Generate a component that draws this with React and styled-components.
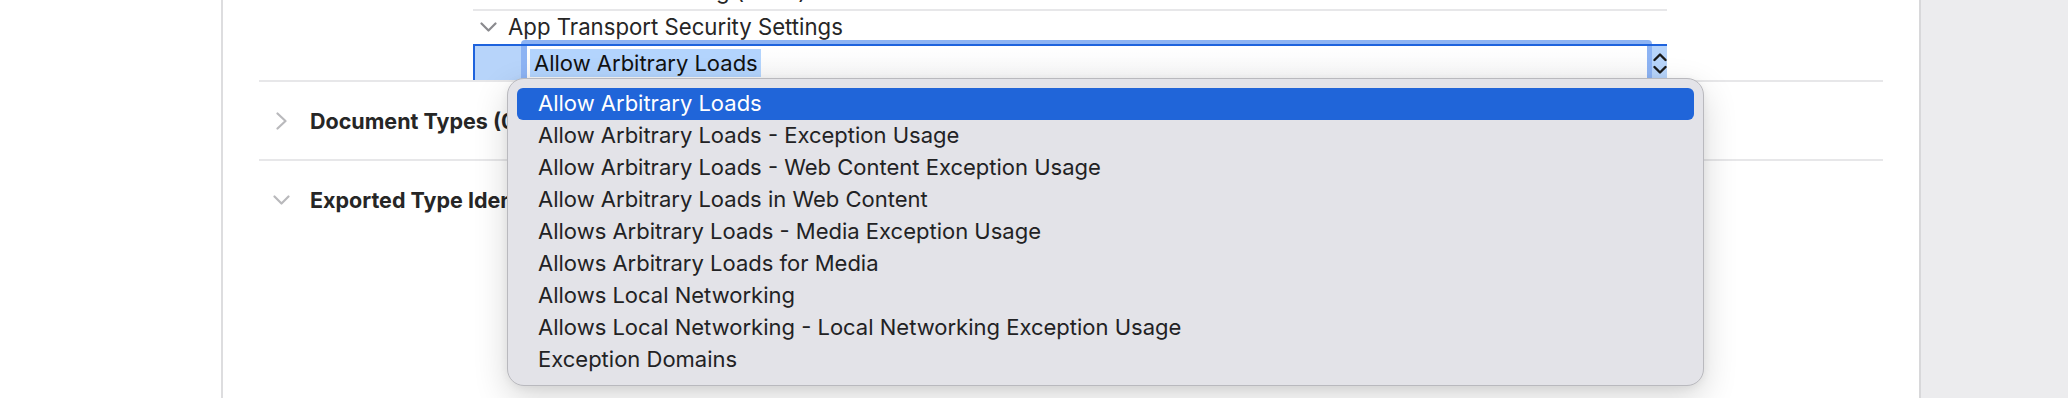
import React from 'react';
import styled, { createGlobalStyle } from 'styled-components';

const GlobalStyle = createGlobalStyle`
  html, body { margin: 0; padding: 0; background: #ffffff; }
  body {
    font-family: Inter, "Noto Sans", "Liberation Sans", sans-serif;
    width: 2068px;
    height: 398px;
    overflow: hidden;
    -webkit-font-smoothing: antialiased;
  }
`;

const Page = styled.div`
  display: flex;
  width: 2068px;
  height: 398px;
  overflow: hidden;
`;

const Sidebar = styled.div`
  width: 221px;
  flex: none;
  background: #ffffff;
  border-right: 2px solid #dddddf;
`;

const Main = styled.main`
  flex: 1;
  min-width: 0;
  display: flex;
  flex-direction: column;
  padding: 0 36px;
  background: #ffffff;
`;

const Inspector = styled.aside`
  width: 147px;
  flex: none;
  background: #ececee;
  border-left: 2px solid #d8d8da;
`;

const PlistTable = styled.div`
  margin: -26px 216px 0 214px;
  display: flex;
  flex-direction: column;
`;

const PlistRow = styled.div`
  display: flex;
  align-items: center;
  height: ${p => p.$h}px;
  padding-left: ${p => p.$indent}px;
  padding-bottom: 2px;
  box-sizing: border-box;
  border-bottom: ${p => (p.$divider ? '2px solid #e7e7e9' : 'none')};
  font-size: 22.2px;
  color: #262626;
  white-space: nowrap;
`;

const Disclosure = styled.span`
  display: inline-flex;
  width: 17px;
  height: 17px;
  align-items: center;
  justify-content: center;
  margin-right: ${p => p.$gap}px;
  color: ${p => p.$color};
  flex: none;
`;

const SelectedRow = styled.div`
  position: relative;
  display: flex;
  height: 34px;
  padding-left: 46px;
  background: #b7d4fa;
  border-top: 2px solid #1e63dd;
  border-left: 2px solid #1e63dd;
`;

const Field = styled.div`
  position: relative;
  flex: 1;
  display: flex;
  align-items: center;
  background: linear-gradient(#ffffff, #f7f7f8);
  border-left: 6px solid #8db3f3;
  border-right: 5px solid #8db3f3;
  padding-left: 3px;
  font-size: 22px;
  color: #111111;

  &::before {
    content: '';
    position: absolute;
    left: -6px;
    right: -5px;
    top: -6px;
    height: 4px;
    background: #8db3f3;
    border-radius: 6px 6px 0 0;
  }
`;

const Selection = styled.span`
  background: #b3d4fd;
  padding: 1px 3px 1px 4px;
  line-height: 26px;
`;

const Stepper = styled.div`
  width: 15px;
  flex: none;
  display: flex;
  align-items: center;
  justify-content: center;
  padding-top: 2px;
`;

const SectionHeader = styled.div`
  display: flex;
  align-items: center;
  height: 77px;
  padding-left: 14px;
  border-top: 2px solid #e7e7e9;
  font-size: 21.5px;
  font-weight: 700;
  color: #262626;
  white-space: nowrap;
`;

const Popup = styled.div`
  position: absolute;
  left: 32px;
  top: 32px;
  width: 1197px;
  box-sizing: border-box;
  padding: 9px;
  background: #e3e3e8;
  border: 1px solid #b9b9be;
  border-radius: 17px;
  box-shadow: 0 12px 34px rgba(0, 0, 0, 0.16), 0 2px 8px rgba(0, 0, 0, 0.06);
  z-index: 10;
`;

const MenuItem = styled.div`
  height: 32px;
  box-sizing: border-box;
  display: flex;
  align-items: center;
  padding-left: 21px;
  padding-bottom: 3px;
  border-radius: 6px;
  font-size: 22px;
  white-space: nowrap;
  color: ${p => (p.$active ? '#ffffff' : '#222224')};
  background: ${p => (p.$active ? '#2065d9' : 'transparent')};
`;

const ChevronDown = () => (
  <svg width="17" height="10" viewBox="0 0 17 10" fill="none">
    <path d="M1.5 1.5 L8.5 8.5 L15.5 1.5" stroke="currentColor" strokeWidth="2.2" strokeLinecap="round" strokeLinejoin="round" />
  </svg>
);

const ChevronRight = () => (
  <svg width="11" height="18" viewBox="0 0 11 18" fill="none">
    <path d="M1.5 1.5 L9.5 9 L1.5 16.5" stroke="currentColor" strokeWidth="2.2" strokeLinecap="round" strokeLinejoin="round" />
  </svg>
);

const StepperIcon = () => (
  <svg width="14" height="24" viewBox="0 0 14 24" fill="none">
    <path d="M1.5 8 L7 2.5 L12.5 8" stroke="#1a1a1a" strokeWidth="2.4" strokeLinecap="round" strokeLinejoin="round" />
    <path d="M1.5 15 L7 20.5 L12.5 15" stroke="#1a1a1a" strokeWidth="2.4" strokeLinecap="round" strokeLinejoin="round" />
  </svg>
);

const options = [
  'Allow Arbitrary Loads',
  'Allow Arbitrary Loads - Exception Usage',
  'Allow Arbitrary Loads - Web Content Exception Usage',
  'Allow Arbitrary Loads in Web Content',
  'Allows Arbitrary Loads - Media Exception Usage',
  'Allows Arbitrary Loads for Media',
  'Allows Local Networking',
  'Allows Local Networking - Local Networking Exception Usage',
  'Exception Domains',
];

export default function App() {
  return (
    <>
      <GlobalStyle />
      <Page>
        <Sidebar />
        <Main>
          <PlistTable>
            <PlistRow $h={37} $indent={35} $divider>
              Bundle version string (short)
            </PlistRow>
            <PlistRow $h={33} $indent={7}>
              <Disclosure $gap={11} $color="#8a8a8e">
                <ChevronDown />
              </Disclosure>
              App Transport Security Settings
            </PlistRow>
            <SelectedRow>
              <Field>
                <Selection>Allow Arbitrary Loads</Selection>
              </Field>
              <Stepper>
                <StepperIcon />
              </Stepper>
              <Popup>
                {options.map((o, i) => (
                  <MenuItem key={o} $active={i === 0}>
                    {o}
                  </MenuItem>
                ))}
              </Popup>
            </SelectedRow>
          </PlistTable>
          <SectionHeader>
            <Disclosure $gap={20} $color="#b9b9bc">
              <ChevronRight />
            </Disclosure>
            Document Types (0)
          </SectionHeader>
          <SectionHeader>
            <Disclosure $gap={20} $color="#b9b9bc">
              <ChevronDown />
            </Disclosure>
            Exported Type Identifiers (0)
          </SectionHeader>
        </Main>
        <Inspector />
      </Page>
    </>
  );
}
